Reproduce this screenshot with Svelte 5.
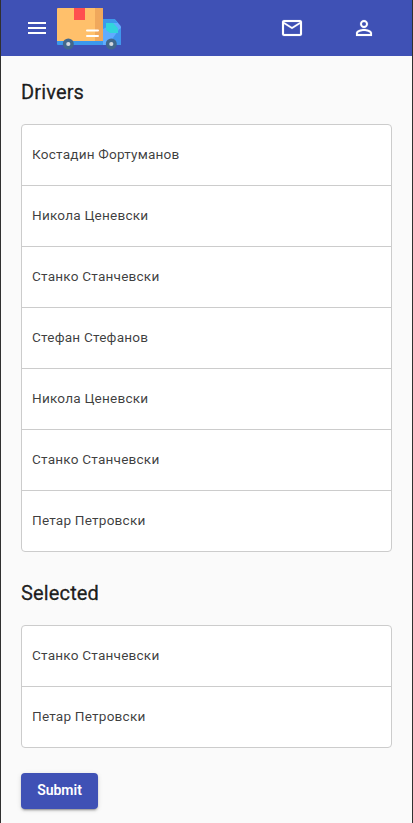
<script>
  const drivers = [
    'Костадин Фортуманов',
    'Никола Ценевски',
    'Станко Станчевски',
    'Стефан Стефанов',
    'Никола Ценевски',
    'Станко Станчевски',
    'Петар Петровски',
  ];
  const selected = ['Станко Станчевски', 'Петар Петровски'];
</script>

{#snippet list(names)}
  <ul class="list">
    {#each names as name}
      <li>{name}</li>
    {/each}
  </ul>
{/snippet}

<div class="page">
  <header>
    <button class="icon menu" aria-label="Menu">
      <svg viewBox="0 0 24 24"><path d="M3 18h18v-2H3v2zm0-5h18v-2H3v2zm0-7v2h18V6H3z" /></svg>
    </button>
    <svg class="truck" viewBox="0 0 64 42">
      <path d="M46 11h10.500q1 0 1.800.8l5 5.600q.7.800.7 1.800V36q0 1-1 1H46z" fill="#61acff" />
      <path d="M62 21.500l2-1.500v16q0 1-1 1h-5.500l-3-5z" fill="#3f96ed" />
      <path d="M46 11h10.500q1 0 1.800.8l2.700 3.200h-11v4l-4 2z" fill="#3c98ec" />
      <path d="M49 15h7.200l4.800 5.200v4.800h-8l-4-3z" fill="#32d5dc" />
      <path d="M0 32h46v5H1q-1 0-1-1z" fill="#3c98ec" />
      <path d="M1 0h44q1 0 1 1v32H0V1q0-1 1-1z" fill="#ffc06b" />
      <path d="M38 0h7q1 0 1 1v32h-8z" fill="#f0a85c" />
      <path d="M17 0h11v12H17z" fill="#ff4f4f" />
      <path d="M30 22.500h11M30 28h11" stroke="#fff" stroke-width="2" stroke-linecap="round" />
      <circle cx="11.300" cy="36" r="5.500" fill="#42688c" />
      <circle cx="11.300" cy="36" r="2.100" fill="#d3d8df" />
      <circle cx="54.300" cy="36" r="5.500" fill="#42688c" />
      <circle cx="54.300" cy="36" r="2.100" fill="#d3d8df" />
    </svg>
    <span class="spacer"></span>
    <button class="icon mail" aria-label="Messages">
      <svg viewBox="0 0 24 24"><path d="M22 6c0-1.100-.9-2-2-2H4c-1.100 0-2 .9-2 2v12c0 1.100.9 2 2 2h16c1.100 0 2-.9 2-2V6zm-2 0l-8 5-8-5h16zm0 12H4V8l8 5 8-5v10z" /></svg>
    </button>
    <button class="icon" aria-label="Profile">
      <svg viewBox="0 0 24 24"><path d="M12 5.900a2.100 2.100 0 1 1 0 4.200 2.100 2.100 0 0 1 0-4.200m0 9c2.970 0 6.100 1.460 6.100 2.100v1.100H5.900V17c0-.64 3.130-2.100 6.100-2.100M12 4C9.790 4 8 5.790 8 8s1.790 4 4 4 4-1.790 4-4-1.790-4-4-4zm0 9c-2.670 0-8 1.340-8 4v3h16v-3c0-2.660-5.330-4-8-4z" /></svg>
    </button>
  </header>

  <main>
    <h2>Drivers</h2>
    {@render list(drivers)}
    <h2>Selected</h2>
    {@render list(selected)}
    <button class="submit">Submit</button>
  </main>
</div>

<style>
  :global(body) {
    margin: 0;
    background: #fafafa;
  }
  .page {
    box-sizing: border-box;
    height: 823px;
    overflow: hidden;
    border: solid #303030;
    border-width: 0 1px;
    background: #fafafa;
    font-family: Roboto, 'Liberation Sans', sans-serif;
    color: rgba(0, 0, 0, 0.87);
  }
  header {
    display: flex;
    align-items: center;
    box-sizing: border-box;
    height: 56px;
    padding: 0 36px 0 24px;
    background: #3f51b5;
  }
  .icon {
    display: block;
    width: 24px;
    height: 24px;
    padding: 0;
    border: 0;
    background: none;
  }
  .icon svg {
    display: block;
    width: 24px;
    height: 24px;
    fill: #fff;
    stroke: #fff;
    stroke-width: 0.15;
  }
  .menu svg {
    stroke: none;
  }
  .truck {
    width: 64px;
    height: 42px;
    margin: 2px 0 0 8px;
  }
  .spacer {
    flex: 1;
  }
  .mail {
    margin-right: 48px;
  }
  main {
    padding: 20px;
  }
  h2 {
    margin: 0 0 16px;
    font-size: 20px;
    line-height: 32px;
    font-weight: 400;
    letter-spacing: 0.15px;
    -webkit-text-stroke: 0.3px currentColor;
  }
  .list {
    margin: 0 0 25px;
    padding: 0;
    list-style: none;
    background: #fff;
    border: 1px solid #ccc;
    border-radius: 4px;
    overflow: hidden;
  }
  li {
    display: flex;
    align-items: center;
    box-sizing: border-box;
    height: 61px;
    padding: 0 10px 2px;
    border-bottom: 1px solid #ccc;
    font-size: 13.6px;
    font-weight: 400;
    letter-spacing: 0.2px;
    color: rgba(0, 0, 0, 0.77);
  }
  li:last-child {
    height: 60px;
    border-bottom: 0;
  }
  .submit {
    display: block;
    width: 77px;
    height: 36px;
    padding: 0 0 2px;
    border: 0;
    border-radius: 4px;
    background: #3f51b5;
    color: #fff;
    font: 600 14px/34px Roboto, 'Liberation Sans', sans-serif;
    box-shadow: 0 3px 1px -2px rgba(0, 0, 0, 0.2), 0 2px 2px rgba(0, 0, 0, 0.14), 0 1px 5px rgba(0, 0, 0, 0.12);
  }
</style>
